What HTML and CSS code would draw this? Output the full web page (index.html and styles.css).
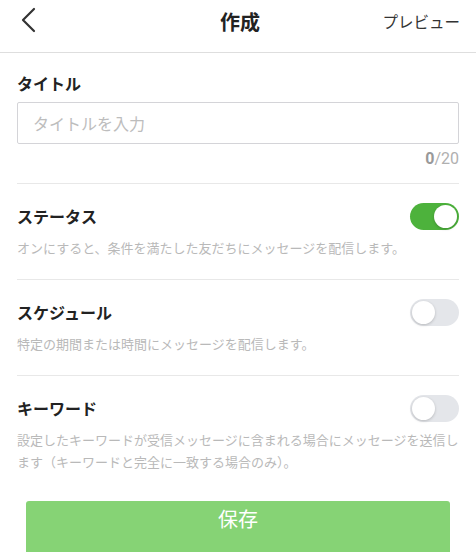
FILE: index.html
```html
<!DOCTYPE html>
<html lang="ja">
<head>
    <meta charset="UTF-8">
    <meta name="viewport" content="width=device-width, initial-scale=1.0">
    <title>作成</title>
    <link rel="stylesheet" href="styles.css">
</head>
<body>
    <header class="header">
        <button class="back" aria-label="戻る">
            <svg width="16" height="26" viewBox="0 0 16 26">
                <path d="M14 2 L3 13 L14 24" fill="none" stroke="#333" stroke-width="2.2" stroke-linecap="round" stroke-linejoin="round"/>
            </svg>
        </button>
        <h1 class="header-title">作成</h1>
        <a class="preview" href="#">プレビュー</a>
    </header>

    <main class="content">
        <!-- タイトル -->
        <section class="section title-section">
            <div class="label">タイトル</div>
            <input type="text" class="title-input" placeholder="タイトルを入力">
            <div class="counter"><b>0</b>/20</div>
        </section>

        <!-- ステータス -->
        <section class="section">
            <div class="row">
                <div class="label">ステータス</div>
                <span class="toggle on"><span class="knob"></span></span>
            </div>
            <p class="desc">オンにすると、条件を満たした友だちにメッセージを配信します。</p>
        </section>

        <!-- スケジュール -->
        <section class="section">
            <div class="row">
                <div class="label">スケジュール</div>
                <span class="toggle"><span class="knob"></span></span>
            </div>
            <p class="desc">特定の期間または時間にメッセージを配信します。</p>
        </section>

        <!-- キーワード -->
        <section class="section last">
            <div class="row">
                <div class="label">キーワード</div>
                <span class="toggle"><span class="knob"></span></span>
            </div>
            <p class="desc">設定したキーワードが受信メッセージに含まれる場合にメッセージを送信します（キーワードと完全に一致する場合のみ）。</p>
        </section>

        <div class="actions">
            <button class="save">保存</button>
        </div>
    </main>
</body>
</html>
```

FILE: styles.css
```css
/* 全体 */
body {
    margin: 0;
    padding: 0;
    background-color: #fff;
    color: #222;
    font-family: "Noto Sans CJK JP", "Noto Sans", sans-serif;
}

/* ヘッダー */
.header {
    height: 52px;
    border-bottom: 1px solid #dedede;
    display: flex;
    align-items: center;
    justify-content: space-between;
    padding: 0 16px 0 20px;
}

.back {
    width: 60px;
    padding: 0;
    border: none;
    background: none;
    display: flex;
    align-items: center;
    margin-top: -12px;
}

.header-title {
    margin: 0;
    font-size: 20px;
    font-weight: bold;
    color: #222;
    margin-top: -10px;
    padding-left: 44px;
}

.preview {
    width: 104px;
    text-align: right;
    font-size: 15.5px;
    color: #333;
    text-decoration: none;
    margin-top: -10px;
}

/* 本文 */
.content {
    padding: 0 17px;
}

.section {
    border-bottom: 1px solid #e8e8e8;
    padding: 18px 0 20px;
}

.section.last {
    border-bottom: none;
}

.title-section {
    padding: 19px 0 14px;
}

.label {
    font-size: 16px;
    font-weight: bold;
    line-height: 22px;
    color: #222;
}

.title-input {
    display: block;
    box-sizing: border-box;
    width: 100%;
    height: 42px;
    margin-top: 8px;
    padding: 0 15px;
    border: 1px solid #d4d4d8;
    border-radius: 2px;
    font-family: inherit;
    font-size: 16px;
    color: #222;
}

.title-input::placeholder {
    color: #bdbdbd;
}

.counter {
    margin-top: 5px;
    text-align: right;
    font-size: 16px;
    line-height: 20px;
    color: #b0b0b0;
    font-family: "Roboto", sans-serif;
}

.counter b {
    color: #999;
}

.row {
    display: flex;
    align-items: center;
    justify-content: space-between;
    height: 28px;
}

.desc {
    margin: 7px 0 0;
    font-size: 13px;
    line-height: 22px;
    color: #b9b9b9;
}

/* トグル */
.toggle {
    position: relative;
    width: 49px;
    height: 27px;
    border-radius: 14px;
    background-color: #e4e6ea;
}

.toggle .knob {
    position: absolute;
    top: 2px;
    left: 2px;
    width: 23px;
    height: 23px;
    border-radius: 50%;
    background-color: #fff;
    box-shadow: 0 1px 3px rgba(0, 0, 0, 0.2);
}

.toggle.on {
    background-color: #4db23c;
}

.toggle.on .knob {
    left: 24px;
}

/* 保存ボタン */
.actions {
    padding: 8px 9px 0;
}

.save {
    width: 100%;
    height: 54px;
    border: none;
    border-radius: 3px;
    background-color: #86d375;
    color: #fff;
    font-family: inherit;
    font-size: 20px;
    padding: 0 0 20px;
}
```
